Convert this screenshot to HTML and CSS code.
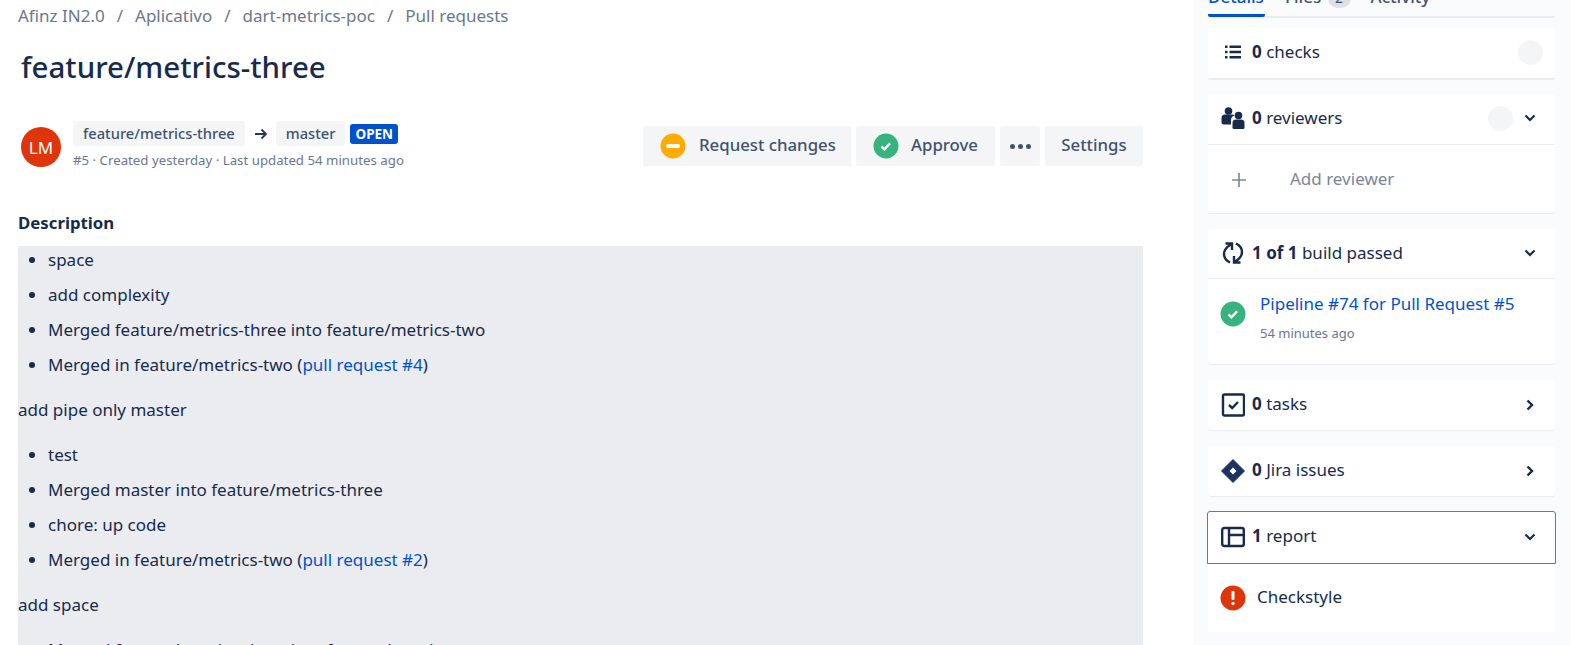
FILE: index.html
```html
<!DOCTYPE html>
<html lang="en">
<head>
<meta charset="utf-8">
<title>feature/metrics-three</title>
<link rel="stylesheet" href="styles.css">
</head>
<body>
<div class="page">
  <main class="main">
    <nav class="crumbs"><span>Afinz IN2.0</span><i>/</i><span>Aplicativo</span><i>/</i><span>dart-metrics-poc</span><i>/</i><span>Pull requests</span></nav>
    <h1 class="title">feature/metrics-three</h1>
    <div class="meta-row">
      <div class="avatar">LM</div>
      <div class="meta">
        <div class="branches">
          <span class="branch">feature/metrics-three</span>
          <svg class="arrow" viewBox="0 0 14 12" width="14" height="12"><path d="M1 6h11M7.500 1.500 12 6l-4.500 4.500" fill="none" stroke="#253858" stroke-width="1.800"/></svg>
          <span class="branch">master</span>
          <span class="lozenge">OPEN</span>
        </div>
        <div class="sub">#5 · Created yesterday · Last updated 54 minutes ago</div>
      </div>
      <div class="actions">
        <button class="btn btn-req"><svg viewBox="0 0 26 26" width="26" height="26"><circle cx="13" cy="13" r="12.500" fill="#ffab00"/><rect x="6" y="11" width="14" height="4" rx="2" fill="#fff"/></svg>Request changes</button>
        <button class="btn btn-app"><svg viewBox="0 0 26 26" width="26" height="26"><circle cx="13" cy="13" r="12.500" fill="#36b37e"/><path d="M8.500 13.500l3 2.800 5.500-6" fill="none" stroke="#fff" stroke-width="2.400"/></svg>Approve</button>
        <button class="btn btn-more"><span class="dot"></span><span class="dot"></span><span class="dot"></span></button>
        <button class="btn btn-set">Settings</button>
      </div>
    </div>
    <h2 class="desc-head">Description</h2>
    <div class="desc">
      <ul>
        <li>space</li>
        <li>add complexity</li>
        <li>Merged feature/metrics-three into feature/metrics-two</li>
        <li>Merged in feature/metrics-two (<a href="#">pull request #4</a>)</li>
      </ul>
      <p>add pipe only master</p>
      <ul>
        <li>test</li>
        <li>Merged master into feature/metrics-three</li>
        <li>chore: up code</li>
        <li>Merged in feature/metrics-two (<a href="#">pull request #2</a>)</li>
      </ul>
      <p>add space</p>
      <ul>
        <li>Merged feature/metrics-three into feature/metrics-two</li>
      </ul>
    </div>
  </main>
  <aside class="side">
    <div class="tabs">
      <span class="tab active">Details</span>
      <span class="tab">Files <b class="count">2</b></span>
      <span class="tab">Activity</span>
    </div>
    <section class="card c-checks">
      <header class="row">
        <svg class="ic" viewBox="0 0 24 24" width="24" height="24"><path d="M4 5.500h2.500V8H4zM4 10.800h2.500v2.500H4zM4 16h2.500v2.500H4zM8.500 5.500H20V8H8.500zM8.500 10.800H20v2.500H8.500zM8.500 16H20v2.500H8.500z" fill="#172b4d"/></svg>
        <span class="label"><b>0</b> checks</span>
        <span class="ghost"></span>
      </header>
    </section>
    <section class="card c-rev">
      <header class="row">
        <svg class="ic" viewBox="0 0 24 24" width="24" height="24"><circle cx="7.500" cy="5" r="3.800" fill="#172b4d"/><path d="M0.500 15v-3A3.500 3.500 0 0 1 4 8.500h7A3.500 3.500 0 0 1 13.500 9.500 5 5 0 0 0 10 14.500V18.500H3A2.500 2.500 0 0 1 .5 16z" fill="#172b4d"/><circle cx="17.500" cy="9.500" r="3.800" fill="#172b4d"/><path d="M11.500 17a3.500 3.500 0 0 1 3.500-3.500h5a3.500 3.500 0 0 1 3.500 3.500v4.500a1.500 1.500 0 0 1-1.500 1.500h-9a1.500 1.500 0 0 1-1.500-1.500z" fill="#172b4d"/></svg>
        <span class="label"><b>0</b> reviewers</span>
        <span class="ghost ghost-chev"></span>
        <svg class="chev" viewBox="0 0 12 12" width="12" height="12"><path d="M1.500 3.500 6 8l4.500-4.500" fill="none" stroke="#172b4d" stroke-width="2.200"/></svg>
      </header>
      <div class="add"><svg viewBox="0 0 16 16" width="16" height="16"><path d="M8 1v14M1 8h14" stroke="#7a869a" stroke-width="1.600" fill="none"/></svg><span>Add reviewer</span></div>
    </section>
    <section class="card c-build">
      <header class="row">
        <svg class="ic" viewBox="0 0 24 24" width="24" height="24"><path d="M10 3.500C5.500 6 3 9 3 13c0 3.500 2 6.500 6 8.500M4.500 2.500h6.500v6.500M14 20.500C18.500 18 21 15 21 11c0-3.500-2-6.500-6-8.500M19.500 21.500H13V15" fill="none" stroke="#172b4d" stroke-width="2.400"/></svg>
        <span class="label"><b>1 of 1</b> build passed</span>
        <svg class="chev" viewBox="0 0 12 12" width="12" height="12"><path d="M1.500 3.500 6 8l4.500-4.500" fill="none" stroke="#172b4d" stroke-width="2.200"/></svg>
      </header>
      <div class="pipe">
        <svg viewBox="0 0 26 26" width="26" height="26"><circle cx="13" cy="13" r="12.500" fill="#36b37e"/><path d="M8.500 13.500l3 2.800 5.500-6" fill="none" stroke="#fff" stroke-width="2.400"/></svg>
        <div class="pipe-text"><a href="#">Pipeline #74 for Pull Request #5</a><small>54 minutes ago</small></div>
      </div>
    </section>
    <section class="card c-one">
      <header class="row">
        <svg class="ic" viewBox="0 0 24 24" width="24" height="24"><rect x="2" y="1.500" width="21" height="21" rx="1.500" fill="none" stroke="#172b4d" stroke-width="2.400"/><path d="M8 12l3.200 3 5.800-6" fill="none" stroke="#172b4d" stroke-width="2.400"/></svg>
        <span class="label"><b>0</b> tasks</span>
        <svg class="chev" viewBox="0 0 12 12" width="12" height="12"><path d="M3.500 1.500 8 6l-4.500 4.500" fill="none" stroke="#172b4d" stroke-width="2.400"/></svg>
      </header>
    </section>
    <section class="card c-one">
      <header class="row">
        <svg class="ic" viewBox="0 0 24 24" width="24" height="24"><path d="M12 .5 23.500 12 12 23.500 .5 12z" fill="#1d3260" stroke="#1d3260" stroke-linejoin="round"/><path d="M12 8.500 15.500 12 12 15.500 8.500 12z" fill="#fff"/></svg>
        <span class="label"><b>0</b> Jira issues</span>
        <svg class="chev" viewBox="0 0 12 12" width="12" height="12"><path d="M3.500 1.500 8 6l-4.500 4.500" fill="none" stroke="#172b4d" stroke-width="2.400"/></svg>
      </header>
    </section>
    <section class="card c-rep">
      <header class="row row-focus">
        <svg class="ic" viewBox="0 0 24 24" width="24" height="24"><rect x="1.200" y="3" width="21.600" height="18" rx="2" fill="none" stroke="#172b4d" stroke-width="2.400"/><path d="M8 3v18M8 10h15" fill="none" stroke="#172b4d" stroke-width="2.400"/></svg>
        <span class="label"><b>1</b> report</span>
        <svg class="chev" viewBox="0 0 12 12" width="12" height="12"><path d="M1.500 3.500 6 8l4.500-4.500" fill="none" stroke="#172b4d" stroke-width="2.200"/></svg>
      </header>
      <div class="report"><svg viewBox="0 0 26 26" width="26" height="26"><circle cx="13" cy="13" r="12.500" fill="#de350b"/><rect x="11.500" y="6" width="3" height="9" rx="1.200" fill="#fff"/><circle cx="13" cy="18.500" r="1.700" fill="#fff"/></svg><span>Checkstyle</span></div>
    </section>
  </aside>
</div>
</body>
</html>
```

FILE: styles.css
```css
* { box-sizing: border-box; }
html, body { margin: 0; height: 645px; overflow: hidden; background: #fff; }
body { font-family: "Noto Sans", "Open Sans", sans-serif; font-size: 17px; color: #172b4d; }
.page { display: flex; height: 645px; }
.main { width: 1193px; padding-left: 18px; padding-right: 50px; flex: none; }
.crumbs { display: flex; height: 31px; align-items: center; color: #6b778c; font-size: 17px; }
.crumbs i { font-style: normal; margin: 0 12px; }
.title { margin: 14px 0 0 3px; font-size: 29.500px; line-height: 44px; font-weight: 500; color: #172b4d; }
.meta-row { display: flex; align-items: flex-start; margin-top: 32px; height: 44px; }
.avatar { width: 40px; height: 40px; margin: 6px 12px 0 3px; border-radius: 50%; background: #de350b; color: #fff; display: flex; align-items: center; justify-content: center; font-size: 17px; flex: none; }
.meta { flex: none; }
.branches { display: flex; align-items: center; height: 25px; }
.branch { background: #f4f5f7; color: #42526e; border-radius: 3px; padding: 0 10px; height: 25px; line-height: 25px; font-size: 14.700px; font-weight: 500; }
.arrow { margin: 0 8px 0 9px; }
.lozenge { margin-left: 5px; background: #0052cc; color: #fff; border-radius: 3px; font-size: 13.500px; line-height: 20px; height: 20px; padding: 0 5px; font-weight: 700; }
.sub { margin-top: 5px; font-size: 13.250px; line-height: 18px; color: #6b778c; }
.actions { margin-left: auto; display: flex; gap: 5px; margin-top: 5px; }
.btn { height: 40px; border: 0; border-radius: 3px; background: #f4f5f7; color: #42526e; font: 500 16.800px "Noto Sans", sans-serif; display: flex; align-items: center; padding: 0 15px 4px; }
.btn svg { margin-right: 13px; margin-top: 4px; flex: none; }
.btn-req { width: 208px; padding-left: 17px; border-radius: 3px 0 0 3px; }
.btn-app { width: 139px; padding-left: 17px; }
.btn-app svg { margin-right: 12px; }
.btn-more { width: 40px; justify-content: center; gap: 3px; padding: 0; }
.dot { width: 5px; height: 5px; border-radius: 50%; background: #42526e; }
.btn-set { width: 98px; justify-content: center; padding: 0 0 4px; }
.desc-head { margin: 46px 0 0; font-size: 16.800px; line-height: 24px; font-weight: 700; color: #172b4d; }
.desc { margin-top: 11px; background: #ebecf0; height: 420px; overflow: hidden; font-size: 17px; line-height: 24px; }
.desc ul { margin: 0; padding: 0 0 0 30px; }
.desc li { margin-bottom: 11px; }
.desc p { margin: 0 0 21px; padding-top: 10px; }
.desc a { color: #0052cc; text-decoration: none; }
.desc ul:first-child { padding-top: 2px; }
.side { flex: 1; background: #fafbfc; padding: 0 16px 0 15px; height: 645px; overflow: hidden; }
.tabs { display: flex; gap: 20px; height: 18px; border-bottom: 2px solid #ebecf0; align-items: flex-end; color: #42526e; font-weight: 500; line-height: 24px; }
.tab { padding-bottom: 7px; height: 31px; flex: none; font-size: 17px; }
.tab.active { color: #0052cc; border-bottom: 3px solid #0052cc; margin-bottom: -1px; border-radius: 2px; padding-bottom: 5px; height: 32px; width: 57px; }
.count { display: inline-block; width: 23px; height: 20px; margin-left: 2px; background: #dfe1e6; border-radius: 10px; text-align: center; font-weight: 400; font-size: 14px; line-height: 20px; color: #42526e; }
.card { background: #fff; border-radius: 3px; margin-bottom: 16px; box-shadow: 0 1px 0 #ebecf0; }
.c-checks { margin-top: 10px; margin-bottom: 15px; }
.row { display: flex; align-items: center; height: 51px; padding: 0 19px 2px 13px; border-bottom: 1px solid #ebecf0; }
.ic { flex: none; margin-right: 7px; }
.label { flex: 1; color: #172b4d; margin-bottom: 2px; }
.label b { font-weight: 700; }
.ghost { width: 25px; height: 25px; border-radius: 50%; background: #f4f5f7; margin-right: -7px; margin-top: 1px; flex: none; }
.ghost.ghost-chev { margin-right: 11px; }
.chev { flex: none; }
.c-rev .add { display: flex; align-items: center; height: 68px; padding: 0 0 2px 23px; color: #7a869a; }
.add svg { margin-right: 43px; margin-top: 4px; }
.c-build .row { height: 50px; }
.c-build .label { margin-bottom: 0; }
.c-build .pipe { display: flex; align-items: flex-start; height: 85px; padding: 13px 10px 0 12px; }
.pipe svg { margin-top: 9px; margin-right: 14px; flex: none; }
.pipe-text a { color: #0052cc; text-decoration: none; display: block; line-height: 24px; }
.pipe-text small { display: block; font-size: 13px; color: #6b778c; line-height: 18px; margin-top: 8px; }
.c-one .row { height: 50px; border-bottom: 0; padding-bottom: 1px; }
.c-rep { margin-top: -1px; box-shadow: none; }
.row-focus { height: 53px; margin: 0 -1px; padding: 0 19px 1px 13px; border: 1px solid #2684ff; border-radius: 3px 3px 0 0; }
.row-focus .label { margin-bottom: 4px; }
.report { display: flex; align-items: center; height: 68px; padding: 0 0 0 12px; }
.report svg { margin-right: 11px; }
.report span { margin-bottom: 4px; }
```
